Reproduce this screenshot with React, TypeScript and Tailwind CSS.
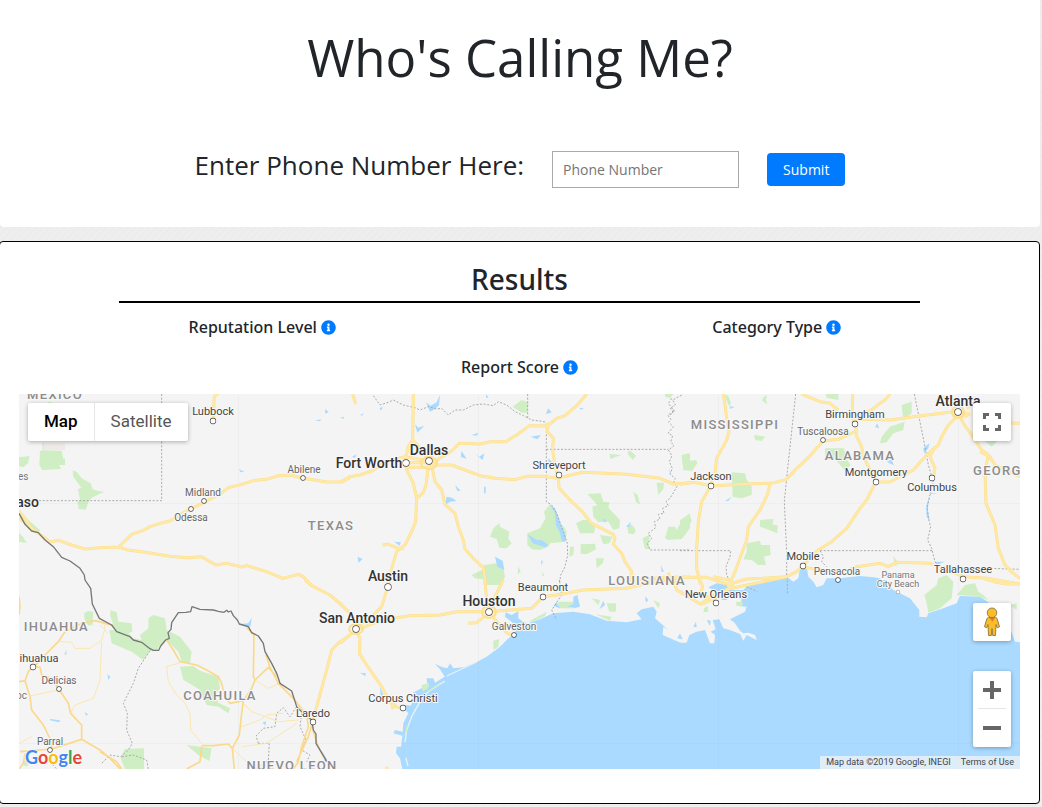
import { FaInfoCircle } from "react-icons/fa";

type Tile = {
  x: number;
  y: number;
  parks: string;
  water: string;
  lakes: string;
  roads: string;
  minor: string;
  trails: string;
  states: string;
};

/* Map geometry, three units to a pixel, each tile placed by its own origin. */
const tiles: Tile[] = [
  {
    x: 0,
    y: 385,
    parks:
      "M57 217 89 213 84 235 70 247 57 243ZM120 197 130 197 127 175 131 175 131 196 185 197 190 222 180 226 195 220 195 240 177 240 184 252 127 255 118 240ZM218 256 230 260 245 280 272 295 278 313 295 318 312 320 275 338 265 352 257 374 236 372 232 350 240 345 234 312 244 308 220 275ZM57 443 70 457 80 474 57 470ZM60 385 85 405 120 435 115 447 85 430 70 412ZM143 52 152 50 158 58 147 58Z",
    water: "",
    lakes:
      "M975 73 986 80 976 87ZM945 106 966 103 958 109ZM1020 98 1032 95 1030 102ZM716 252 733 260 722 262Z",
    roads:
      "M57 378 75 400 95 430 122 450 150 471 176 466 215 480 255 492 300 488 356 486 395 448 430 436 450 425 480 415 510 408 550 383 600 358 660 327 685 308 725 298 760 287 800 283 835 272 870 270 910 280 980 291 1028 290 1050 278M356 486 380 494 435 502 510 514 560 518 605 515 630 530 648 540 680 535 725 546 740 542 800 560 848 580 895 568 910 575 935 602M656 25 Q640 30 642 50 L640 115M57 402 72 408",
    minor: "",
    trails: "",
    states: "M485 27V347H57",
  },
  {
    x: 340,
    y: 385,
    parks:
      "M518 65 545 45 565 52 563 83 545 83ZM450 455 460 430 478 413 480 425 508 440 505 462 515 475 500 490 478 488 470 462ZM562 445 600 430 617 400 612 380 630 358 648 385 650 410 672 425 680 440 676 470 630 475 625 485 600 495 575 493 562 480ZM742 327 782 325 790 350 808 352 805 368 840 405 838 430 820 435 805 410 775 412 760 395 757 365 772 360ZM708 415 728 405 745 405 765 425 762 445 720 445ZM722 478 765 476 768 493 740 508 722 506ZM780 450 818 455 808 475 790 478ZM768 520 792 520 788 535 770 550ZM862 425 875 418 887 435 882 448 865 445ZM880 320 893 330 900 358 888 352ZM808 207 845 210 828 215 812 222ZM868 195 888 212 878 225 862 205ZM950 293 972 293 970 312 955 330ZM975 460 985 425 1005 425 1010 435 1030 400 1050 385V430L1025 462 985 465ZM1026 215 1050 205V258L1030 255ZM395 570 430 553 432 540 470 535 490 550 495 575 485 600 430 600 432 583 405 580ZM690 485 702 485 700 510 688 515ZM975 27H1000L990 40 975 35ZM908 460 930 448 925 480 932 492 915 492ZM535 542 542 560 533 568ZM608 560 614 575 606 570Z",
    water: "",
    lakes:
      "M630 360 645 370 655 395 665 425 678 455 676 470 665 468 660 445 648 420 645 385ZM562 448 590 465 605 465 625 480 615 487 578 475ZM258 52 272 62 290 52 300 30 297 60 285 72 270 80ZM225 118 235 128 253 122 232 143ZM624 70 635 82 618 88ZM572 155 603 150 592 163ZM365 198 380 222 362 215ZM402 205 418 215 433 205 428 225ZM345 300 362 317 352 318ZM320 335 335 338 350 348 330 350 315 360ZM432 305H437V325H432ZM465 515 488 527 493 555 472 545ZM163 470 183 472 178 482ZM53 515 68 522 55 533ZM625 220 637 232 625 235ZM858 425 873 410 868 425ZM395 150 415 143 410 152ZM962 540 972 560 965 560ZM788 400 798 406 794 413ZM118 70 128 65 124 77ZM60 90 72 85 66 92ZM438 28 446 38 438 38ZM718 68 732 70 722 74ZM604 525 609 530 604 542ZM36 215 50 208 44 219ZM988 250 993 265 990 268Z",
    roads:
      "M38 27 47 57M220 27 218 165 205 185 198 215 198 250M218 165 240 188 255 210 290 228M198 247H280M198 233H265M0 292 30 275 60 270 95 258 130 235 170 222 195 215 250 225 288 240M267 240 335 198 358 175 420 177 450 170 497 170 530 150 568 122 622 123 650 100 675 92 710 62 740 27M280 240H335L420 272 465 280 525 284 560 274 610 274 650 280 730 262 860 268 960 280 1000 297 1050 294M622 113V140L640 160 638 195 645 245 655 275 657 308 690 345 725 378 755 415 820 448 825 460 820 478 845 505 855 530 875 560 872 590M198 250 220 295 230 340 227 410 215 440 195 480 170 500 155 550 145 600M128 480 145 478 175 490 192 490M265 245 258 300 250 322 230 340M275 240 285 290 305 315 315 358 345 385 355 425 370 465 375 492 400 520 430 548 437 600M900 585 985 575 1050 577M985 563 990 577",
    minor: "",
    trails: "",
    states:
      "M100 32 120 60 145 52 160 45 190 60 225 68 240 75 265 65 290 72 305 70 325 90 345 75 370 75 400 60 430 57 460 62 475 50 500 60 525 80 550 92 575 105 600 108 620 112M563 27V98M619 115V350L635 360 650 385 670 440 682 475 683 510 675 545 662 570 658 600M619 193H985M1025 30 998 45 1006 60 990 70 1005 78 983 90 993 103 986 112 1000 125 984 145 998 152 992 170 1002 182 985 195 996 212 988 230 997 250 990 268 1006 280 1000 295 1012 303 990 340 978 350 985 362 968 370 972 385 955 388 960 402 943 410 947 428 925 445 935 460 922 475 930 495H1050M995 40 985 55 1000 75 992 90",
  },
  {
    x: 680,
    y: 385,
    parks:
      "M133 30 145 32 153 55 145 60ZM248 38 262 30 258 42 262 58 247 48ZM437 27H475V45L440 38ZM222 150 256 155 245 168 225 165ZM5 210 25 205 25 228 48 225 52 235 35 260 25 248 8 240ZM0 405 30 388 35 410 0 455ZM155 262 195 265 200 285 215 303V330L185 340 158 335ZM240 405 280 402 278 420 293 420 292 445 275 438 260 432 240 425ZM200 475 240 467 243 480 270 480 272 510 252 515 258 540 235 540 215 525 190 523 200 500ZM630 125 660 115 675 110 668 90 665 60 680 55 695 50 695 85 675 100 670 135 640 145 620 172 600 175 605 155ZM435 190H492L498 220 512 240 495 258 470 228 435 220ZM905 160H960L935 185ZM640 512 652 530 648 545 642 530Z",
    water: "",
    lakes:
      "M730 190 748 175 745 190 732 205ZM748 332 738 365 740 395 750 408 743 375ZM620 228 635 225 642 240 630 236ZM592 115 597 130 585 126ZM148 50 152 65 165 65 150 72ZM748 323 773 325 752 327ZM135 348 155 335 145 348ZM765 530 795 530 770 540Z",
    roads:
      "M130 27 135 60 140 100 147 140 140 165 110 220 105 265 92 300M0 298 40 292 95 303 195 297 275 295 320 283 350 250 385 218 405 195 430 168 475 163 525 140M515 105 560 103 630 105 700 95 760 88 835 78 870 88M920 110 1020 115M92 303 65 350 55 410 50 490 50 550 62 600M270 297 262 330 240 375 205 425 200 465 165 560 148 600M365 27 420 50 450 55 475 75M518 27 517 75 527 118 530 155 545 185 550 215 588 290M630 27 615 45 600 55 570 78 540 90M588 290 630 291 700 255 740 210 775 180 785 155 805 120 835 90 850 75M765 185 750 215 765 250 760 280M588 290 560 345 540 370 500 430 455 470 410 498 370 540 350 560 320 575 250 580 200 582 140 600M835 80 850 115 875 150 905 195 925 210 915 260 918 355 945 420 955 490 975 540 1000 565 1020 580M900 200 930 215 945 240 990 262 1020 275M0 577H80L150 600M370 547 410 553 450 560 480 565 530 545 600 535 625 545 650 532 750 535 790 550 850 575 920 580 980 590 1020 597M820 60 790 35M855 95 870 85M880 55 860 70M818 92 865 92",
    minor: "",
    trails: "",
    states:
      "M347 27 322 260 313 350 320 500V575M703 27 735 185 745 240 760 290 750 330 742 365 745 400 752 425 743 465 755 490 765 530 775 545 1020 553M0 497H152L150 515 138 545 140 570 155 600M420 497H757M420 497 430 515 425 530 440 545",
  },
  {
    x: 0,
    y: 580,
    parks:
      "M253 98 265 93 280 95 278 135 265 137 253 115ZM332 90 350 97 355 125 395 130 397 155 385 160 400 175 425 180 420 165 445 145 445 115 460 105 495 115 500 150 540 170 575 215 570 250 545 245 535 215 500 180 480 195 470 210 450 212 430 240 395 215 335 190 328 150 345 150 340 135 330 105ZM540 260 580 258 600 272 655 290 660 325 645 345 655 368 690 385 685 400 655 380 620 375 605 345 600 330 560 305 550 300ZM370 515 375 507 432 505V567H375L362 535ZM560 495 600 500 635 505 628 543 595 525ZM75 535 90 545 80 560 70 555Z",
    water: "",
    lakes:
      "M720 132 745 130 755 113 752 138 740 142ZM193 222 200 210 198 225ZM322 283 331 290 325 300ZM150 417 180 421 178 427 150 421ZM254 397 265 403 258 407ZM788 428 798 423 796 437ZM962 508 985 545 975 545Z",
    roads:
      "M915 0 935 17 990 45 1025 75 1052 102M1052 165 1020 185 995 210 980 270 950 380 938 420",
    minor:
      "M57 50 60 80 57 105M100 262 135 225 175 185 195 155 245 130 285 122 340 137M57 305 75 302 85 275 100 258 120 262 125 285 155 295 175 325 205 370 212 400 245 435 245 478 155 507 60 515M75 302 90 350 95 390 130 435 152 480 155 505M245 478 300 510 330 535 360 567M300 515 350 545 365 567M500 180 520 210 540 245 590 255 620 270 655 290 665 310 675 350 690 370 730 362 755 325 765 300 805 262 830 290M740 142 762 165 760 290 765 300M798 225 810 262 835 310 880 355 920 405 925 440 905 500 895 545 880 567M605 497 640 497 685 492 697 505 718 465 725 400 730 362M605 500 600 545 560 567M697 505 703 567M938 425 925 470 890 545M75 520 70 550 57 567M938 425 940 455 955 500 975 540",
    trails:
      "M180 185 215 187 225 205 270 205 305 180 315 145 310 125M305 185 300 300 280 355 225 375 212 400M540 248 500 260 505 305 530 345 555 370 570 400 572 450 605 490M765 300 805 325 840 310M725 440 780 420 800 405 850 400M730 370 755 395 835 425 895 420M725 500 800 490 890 430M697 505 740 545 765 550M90 348 175 330M325 160 300 135M57 490 95 470",
    states:
      "M450 212 415 265 400 310 370 370 382 400 380 450 397 490 385 510 362 530 330 525 305 550M775 490 768 468 790 445 825 440 830 400 850 383 870 410 890 380M775 490H808L805 540 770 567M905 400 900 440 918 480 905 510 930 525 920 545M365 530 400 525 440 540 445 567M150 545 170 567",
  },
  {
    x: 340,
    y: 580,
    parks:
      "M245 315 268 308 265 325 248 335ZM460 182 478 177 475 200 460 210ZM655 65H700L705 85H655ZM755 55 780 60 775 75ZM800 70H828V95H808ZM565 125 620 95 615 108 580 125ZM765 103 815 110 810 122ZM940 60 960 70 955 85ZM445 0H490L480 12 455 12Z",
    water:
      "M187 567 180 535 168 520 170 500 183 500 187 467 160 460 165 450 188 455 190 430 205 400 190 385 200 375 212 377 230 345 218 338 240 327 262 315 260 295 280 295 285 308 314 290 300 268 285 252 308 262 322 265 330 250 340 265 370 262 412 245 440 230 480 200 500 180 515 167 530 150 520 130 495 110 497 97 515 105 535 93 535 115 550 125 565 130 600 118 640 100 700 95 750 103 800 122 860 127 905 118 890 100 905 88 940 80 950 95 945 115 985 150 970 140 968 165 1025 190V567Z",
    lakes:
      "M700 50 712 45 720 80 700 85ZM640 78 650 65 660 85ZM778 88 790 62 795 75ZM60 278 78 280 75 288ZM1012 175 1020 160 1028 178ZM915 48 925 60 918 68ZM120 320 130 345 122 348ZM682 80 700 72 710 82Z",
    roads:
      "M0 70 30 100 50 130M145 15 125 80 100 105 45 145M0 190 25 168 50 150M48 150 60 175 58 220 80 255 125 320 150 365 160 378 188 385M50 150 100 130 170 113 210 107 300 105 350 95 450 95 575 85 609 50 650 45 730 30 860 25 900 15 1025 -8M385 130 410 128 450 97M435 0 440 60 448 95M490 0 465 50 450 92M448 98 480 135 500 158 515 165M155 387 165 370M1000 -5 1010 30 1030 42M135 565H145",
    minor: "",
    trails: "",
    states: "M658 0 665 45 635 90 650 120",
  },
  {
    x: 680,
    y: 580,
    parks:
      "M733 45 770 15 775 -5 800 -15 820 5 815 55 780 85 745 98 740 70ZM830 45 855 15 885 10 895 35 910 45 925 60 900 52 880 48ZM990 75 1010 70V90ZM168 65H188V78H170ZM72 85 83 78 85 95 70 97Z",
    water:
      "M0 188 20 188 28 165 50 155 75 150 90 190 103 190 105 165 92 155 107 148 98 120 118 118 130 145 150 150 180 162 190 182 200 165 230 180 225 165 205 158 190 160 180 152 165 130 150 118 195 95 200 80 175 78 185 60 175 45 150 40 145 30 190 30 205 15 280 0 320 -10 340 5 355 -5 360 -35 380 -40 385 -10 400 5 410 22 430 15 440 -5 480 -5 540 -12 580 -8 600 -5 640 30 690 55 718 90 718 110 740 112 745 100 790 85 830 70 840 48 900 50 960 90 985 130 1005 185 1020 187V567H0Z",
    lakes:
      "M85 22 110 10 140 15 145 30 115 35 95 28ZM120 45 150 45 140 60 125 60ZM40 140 48 125 50 142ZM80 120 92 122 90 138Z",
    roads:
      "M55 -10 68 20 60 45 85 50M0 35 12 42 60 72M60 75 105 55 140 28 250 5 320 -10M150 0 160 20 125 38 90 50 60 75M100 -10 148 0M910 -5 940 5 980 12 1020 12",
    minor: "",
    trails: "",
    states: "M322 -10V40M200 20 232 35",
  },
];

const nationalBorder =
  "M57 385 75 418 95 438 115 443 135 465 160 485 185 517 210 528 240 550 253 570 255 585 272 610 277 657 298 700 335 720 350 740 390 755 400 765 425 772 450 791 460 796 476 796 482 783 497 765 508 760 504 743 513 733 515 713 535 683 557 682 572 680 576 665 600 673 640 675 655 679 672 682 680 676 685 681 693 678 700 692 712 705 718 717 745 725 755 743 775 753 790 775 795 800 815 835 830 865 840 895 875 918 890 965 905 980 935 1005 940 1035 948 1047 948 1075 975 1120 980 1130";

type Place = [name: string, x: number, y: number, dotX: number, dotY: number];

const metros: Place[] = [
  ["Dallas", 429, 455, 429, 461],
  ["Fort Worth", 369, 468, 406, 463],
  ["Austin", 388, 581, 388, 587],
  ["Houston", 489, 606, 489, 612],
  ["San Antonio", 357, 623, 356, 629],
  ["Atlanta", 958, 406, 958, 412],
];

const cities: Place[] = [
  ["Lubbock", 213, 415, 213, 421],
  ["Shreveport", 559, 469, 559, 475],
  ["Jackson", 711, 480, 711, 486],
  ["Birmingham", 855, 418, 855, 424],
  ["Montgomery", 876, 476, 876, 482],
  ["Columbus", 932, 491, 932, 478],
  ["Mobile", 803, 560, 803, 566],
  ["Tallahassee", 963, 573, 963, 579],
  ["Beaumont", 543, 591, 543, 597],
  ["New Orleans", 716, 598, 716, 603],
  ["Corpus Christi", 403, 702, 403, 708],
  ["Laredo", 313, 717, 313, 722],
  ["ihuahua", 39, 662, 33, 667],
];

const towns: Place[] = [
  ["Abilene", 304, 473, 303, 478],
  ["Midland", 203, 496, 204, 501],
  ["Odessa", 191, 521, 191, 509],
  ["Tuscaloosa", 823, 435, 823, 440],
  ["Pensacola", 837, 575, 838, 580],
  ["Galveston", 514, 630, 514, 635],
  ["Delicias", 59, 684, 59, 689],
  ["Parral", 50, 745, 50, 750],
];

const regions: [string, number, number][] = [
  ["TEXAS", 331, 530],
  ["LOUISIANA", 647, 585],
  ["MISSISSIPPI", 735, 429],
  ["ALABAMA", 860, 460],
  ["COAHUILA", 220, 700],
  ["NUEVO LEON", 292, 770],
  ["MEXICO", 55, 399],
];

function Layer({ of, className }: { of: keyof Tile; className: string }) {
  return (
    <g className={className}>
      {tiles.map((tile, i) => (
        <path
          key={i}
          d={String(tile[of])}
          transform={`translate(${tile.x} ${tile.y}) scale(0.3333333)`}
        />
      ))}
    </g>
  );
}

function Places({ items, className, r }: { items: Place[]; className: string; r: number }) {
  return (
    <g>
      {items.map(([name, x, y, dotX, dotY]) => (
        <g key={name}>
          <circle cx={dotX} cy={dotY} r={r} className="fill-white stroke-[#444] stroke-[1.3]" />
          <text x={x} y={y} textAnchor="middle" className={className}>
            {name}
          </text>
        </g>
      ))}
    </g>
  );
}

function MapDrawing() {
  return (
    <svg
      viewBox="19 394 1001 375"
      preserveAspectRatio="xMidYMid slice"
      className="block size-full font-[Roboto,sans-serif] [paint-order:stroke] [stroke-linejoin:round]"
      role="img"
      aria-label="Map of Texas and the Gulf Coast"
    >
      <rect x="19" y="394" width="1001" height="375" className="fill-[#f4f4f4]" />
      <path d="M42 443h23v7H42z" className="fill-[#efe9e7]" />
      <Layer of="water" className="fill-[#aadaff]" />
      <Layer of="parks" className="fill-[#cfeec4]" />
      <Layer of="lakes" className="fill-[#aadaff]" />
      <g transform="translate(340 580) scale(0.3333333)" className="fill-none stroke-[#e9f3f2] stroke-[4]">
        <path d="M195 487 200 450 215 410 240 365 265 335 315 303M320 288 410 246M197 533 204 558" />
        <path d="M195 467 203 435M265 335 300 310" className="stroke-[#cfeec4]" />
      </g>
      <path
        d="M238.500 394V769M478.500 394V769M718.500 394V769M958.500 394V769M19 503.500H1020M19 743.500H1020"
        className="fill-none stroke-[#808080]/5"
      />
      <Layer of="states" className="fill-none stroke-[#aaa] stroke-3 [stroke-dasharray:6_5]" />
      <Layer of="trails" className="fill-none stroke-[#fbe6b0] stroke-3" />
      <Layer of="minor" className="fill-none stroke-[#fbd98b] stroke-[5]" />
      <Layer of="roads" className="fill-none stroke-[#fcdf8e] stroke-[9]" />
      <Layer of="roads" className="fill-none stroke-[#ffe9a5] stroke-[6]" />
      <g className="fill-none stroke-[#fde08f] stroke-2">
        <ellipse cx="356" cy="629" rx="7" ry="5" />
        <ellipse cx="489" cy="612" rx="7" ry="6" />
        <ellipse cx="958" cy="412" rx="6" ry="6" />
        <ellipse cx="429" cy="463" rx="8" ry="6" />
      </g>
      <path
        d={nationalBorder}
        transform="translate(0 385) scale(0.3333333)"
        className="fill-none stroke-[#777] stroke-4"
      />
      <g className="fill-[#8c8c8c] stroke-[#f8f8f8] stroke-2 text-[13px] font-medium tracking-widest">
        {regions.map(([name, x, y]) => (
          <text key={name} x={x} y={y} textAnchor="middle">
            {name}
          </text>
        ))}
        <text x="89" y="631" textAnchor="end">IHUAHUA</text>
        <text x="973" y="475">GEORGIA</text>
      </g>
      <Places
        items={towns}
        r={2}
        className="fill-[#666] stroke-[#f8f8f8] stroke-2 text-[10px]"
      />
      <Places
        items={cities}
        r={2.5}
        className="fill-[#444] stroke-[#f8f8f8] stroke-2 text-[11px]"
      />
      <Places
        items={metros}
        r={3}
        className="fill-[#333] stroke-[#f8f8f8] stroke-2 text-[14px] font-medium"
      />
      <g className="fill-[#777] stroke-[#f8f8f8] stroke-2 text-[9px]">
        <circle cx="898" cy="592" r="1.700" className="fill-white stroke-[#777] stroke-1" />
        <text x="898" y="578" textAnchor="middle">Panama</text>
        <text x="898" y="587" textAnchor="middle">City Beach</text>
        <text x="18" y="480" className="text-[10px]">es</text>
        <text x="16" y="699" className="text-[10px]">oc</text>
      </g>
      <text x="39" y="507" textAnchor="end" className="fill-[#333] stroke-[#f8f8f8] stroke-2 text-[14px] font-medium">
        aso
      </text>
    </svg>
  );
}

function Pegman() {
  return (
    <svg viewBox="0 0 18 30" className="h-[30px] w-[18px]" aria-hidden="true">
      <path
        d="M5.500 10.500h7l1.600 1 2.400 8.300-2.200 1-1.300-3.300-.5 11H9.700L9 21.500l-.7 7H5.500L5 17.500l-1.300 3.300-2.200-1 2.400-8.300z"
        fill="#fbbc29"
        stroke="#8a7745"
        strokeWidth=".9"
        strokeLinejoin="round"
      />
      <path d="M6 10.500h6l-2.600 4.300z" fill="#e07b26" />
      <circle cx="9" cy="5.800" r="4.800" fill="#fbbc29" stroke="#8a7745" strokeWidth=".9" />
    </svg>
  );
}

function Metric({ label }: { label: string }) {
  return (
    <h3 className="flex h-6 items-center justify-center gap-1 font-['Noto_Sans',sans-serif] text-[16px] font-medium">
      {label}
      <button type="button" aria-label={`About ${label}`} className="text-[#007bff]">
        <FaInfoCircle className="size-[15px]" />
      </button>
    </h3>
  );
}

const control = "flex items-center justify-center rounded-xs bg-white shadow-[0_1px_4px_rgba(0,0,0,0.3)]";

export default function App() {
  return (
    <div className="min-h-screen bg-[#ededed] bg-[repeating-linear-gradient(135deg,#eeeeee_0,#ebebeb_2px,#efefef_3px,#ededed_5px)] pr-0.5 font-['Open_Sans','Noto_Sans',sans-serif] text-[#212529]">
      <header className="rounded-b bg-white px-4 pt-6 pb-[39px]">
        <h1 className="text-center text-[51px] leading-[67px]">Who's Calling Me?</h1>
        <form
          className="mt-[58px] flex flex-wrap items-baseline justify-center gap-7"
          onSubmit={(e) => e.preventDefault()}
        >
          <label htmlFor="phone" className="text-[26px] leading-8">
            Enter Phone Number Here:
          </label>
          <input
            id="phone"
            type="tel"
            placeholder="Phone Number"
            className="h-[37px] w-[187px] border border-[#a9a9a9] px-[10px] text-[14px] placeholder:text-[#757575]"
          />
          <button type="submit" className="h-[33px] rounded bg-[#007bff] px-4 text-[14px] text-white">
            Submit
          </button>
        </form>
      </header>

      <main className="mt-3.5 -ml-px rounded border border-black bg-white px-[19px] pt-[19px] pb-[34px]">
        <h2 className="mx-[10%] border-b-2 border-black pb-1 text-center font-['Noto_Sans',sans-serif] text-[28px] leading-9 font-medium">
          Results
        </h2>
        <div className="-mx-3.5 mt-3 grid grid-cols-2">
          <Metric label="Reputation Level" />
          <Metric label="Category Type" />
        </div>
        <div className="mt-4">
          <Metric label="Report Score" />
        </div>

        <section aria-label="Caller location" className="relative mt-[15px] h-[375px] overflow-hidden font-[Roboto,sans-serif]">
          <MapDrawing />

          <div className="absolute top-[9px] left-[9px] flex h-[38px] rounded-xs bg-white text-[17px] shadow-[0_1px_4px_rgba(0,0,0,0.3)]">
            <button type="button" className="border-r border-[#e6e6e6] px-4 font-medium text-black">
              Map
            </button>
            <button type="button" className="px-4 text-[#565656]">
              Satellite
            </button>
          </div>

          <button type="button" aria-label="Toggle fullscreen view" className={`${control} absolute top-[9px] right-[9px] size-[38px]`}>
            <svg viewBox="0 0 18 18" className="size-[18px]" aria-hidden="true">
              <path
                d="M1.500 6V1.500H6M12 1.500h4.500V6M16.500 12v4.500H12M6 16.500H1.500V12"
                fill="none"
                stroke="#666"
                strokeWidth="3"
              />
            </svg>
          </button>

          <div className="absolute right-[9px] bottom-[22px] flex flex-col gap-[30px]">
            <button type="button" aria-label="Street View" className={`${control} size-[38px]`}>
              <Pegman />
            </button>
            <div className={`${control} w-[38px] flex-col`}>
              <button type="button" aria-label="Zoom in" className="flex h-[37px] w-full items-center justify-center">
                <svg viewBox="0 0 18 18" className="size-[18px]" aria-hidden="true">
                  <path d="M9 0v18M0 9h18" stroke="#666" strokeWidth="4" />
                </svg>
              </button>
              <span className="h-px w-7 bg-[#e6e6e6]" />
              <button type="button" aria-label="Zoom out" className="flex h-[38px] w-full items-center justify-center">
                <svg viewBox="0 0 18 18" className="size-[18px]" aria-hidden="true">
                  <path d="M0 9h18" stroke="#666" strokeWidth="4" />
                </svg>
              </button>
            </div>
          </div>

          <a
            href="#google"
            className="absolute bottom-0 left-1.5 font-[Lato,sans-serif] text-[18px] leading-6 font-bold [text-shadow:0_0_2px_#fff,0_0_2px_#fff]"
          >
            <span className="text-[#4285f4]">G</span>
            <span className="text-[#ea4335]">o</span>
            <span className="text-[#fbbc05]">o</span>
            <span className="text-[#4285f4]">g</span>
            <span className="text-[#34a853]">l</span>
            <span className="text-[#ea4335]">e</span>
          </a>

          <div className="absolute right-0 bottom-0 flex gap-2.5 bg-[#f5f5f5]/70 px-1.5 text-[9px] leading-[13px] text-[#444]">
            <span>Map data ©2019 Google, INEGI</span>
            <a href="#terms">Terms of Use</a>
          </div>
        </section>
      </main>
    </div>
  );
}
